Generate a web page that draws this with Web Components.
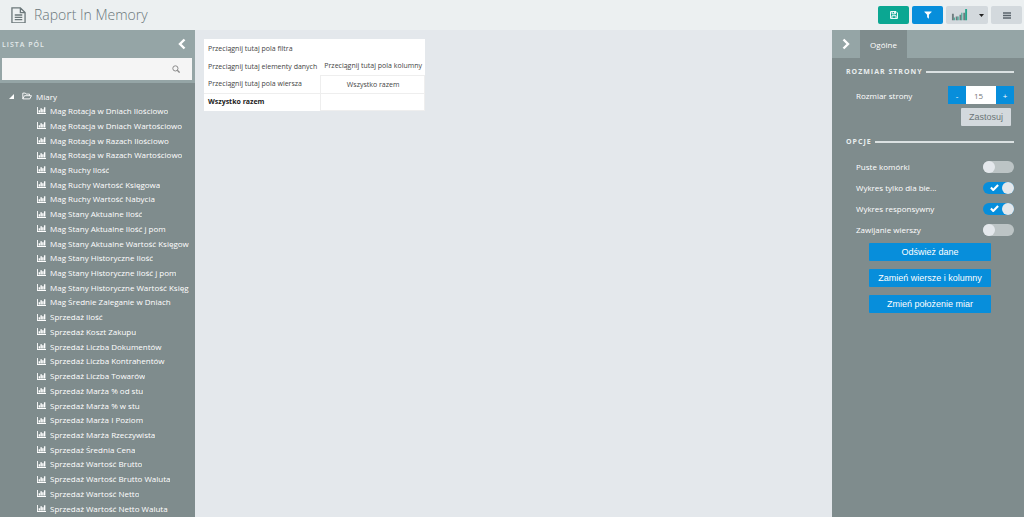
<!DOCTYPE html>
<html lang="pl">
<head>
<meta charset="utf-8">
<title>Raport In Memory</title>
<style>
html, body { height: 100%; }
body { margin: 0; font-family: "Open Sans", "Noto Sans", sans-serif; font-size: 8px; background: #e4e8ec; color: #fff; }
</style>
</head>
<body>
<report-app></report-app>
<script>
const define = (name, html, setup) => {
  const template = document.createElement('template');
  template.innerHTML = '<style>*{box-sizing:border-box}button,input{font:inherit;margin:0;border:0}</style>' + html;
  customElements.define(name, class extends HTMLElement {
    constructor() {
      super();
      this.attachShadow({ mode: 'open' }).append(template.content.cloneNode(true));
    }
    connectedCallback() {
      if (setup && !this.ready) { this.ready = true; setup(this, this.shadowRoot); }
    }
  });
};

const icons = {
  file: '<svg viewBox="0 0 16 18"><path d="M1 1h9l5 5v11H1zM10 1v5h5M4 8.500h8M4 11h8M4 13.500h8" fill="none" stroke="currentColor" stroke-width="1.400"/></svg>',
  left: '<svg viewBox="0 0 8 12"><path d="M6.500 1.500 2 6l4.500 4.500" fill="none" stroke="currentColor" stroke-width="2.400"/></svg>',
  right: '<svg viewBox="0 0 8 12"><path d="M1.500 1.500 6 6l-4.500 4.500" fill="none" stroke="currentColor" stroke-width="2.400"/></svg>',
  search: '<svg viewBox="0 0 8 8"><circle cx="3.400" cy="3.400" r="2.600" fill="none" stroke="currentColor"/><path d="m5.300 5.300 2.300 2.300" stroke="currentColor" stroke-width="1.300"/></svg>',
  folder: '<svg viewBox="0 0 10 8"><path d="M.8 6.900V1.100h2.500l.8 1h3.400v1.500M.8 6.900l1.700-3.200h7L7.800 6.900z" fill="none" stroke="currentColor" stroke-width=".9" stroke-linejoin="round"/></svg>',
  chart: '<svg viewBox="0 0 10 8"><path d="M0 0h1v6.800H10v1H0zM1.800 3.500h1.600v2.700H1.800zM3.800 1.300h1.600v4.900H3.800zM5.800 2.600h1.500v3.600H5.800zM7.700.3h1.600v5.900H7.700z" fill="currentColor"/></svg>',
  save: '<svg viewBox="0 0 9 9"><path d="M.6.6h6.200l1.600 1.600v6.200H.6zM2.400.8v2.400h3.700V.8M2.200 8.200V5.300h4.600v2.900" fill="none" stroke="currentColor" stroke-width="1.100"/><path d="M4.600 1h1v1.700h-1z" fill="currentColor"/></svg>',
  filter: '<svg viewBox="0 0 8 8"><path d="M.4.400h7.200v.5L4.900 3.700v4L3.100 6.200V3.700L.4.900z" fill="currentColor"/></svg>',
  bars: '<svg viewBox="0 0 18 12"><path d="M1 5h2v7H1zM5 8h2v4H5zM9 6h2v6H9zM13 4h2v8h-2z" fill="#6f7d80"/><path d="M3 9h1v3H3zM7 8h1v4H7zM11 4h1v8h-1zM15 0h2v12h-2z" fill="#27a68d"/></svg>',
  caret: '<svg viewBox="0 0 5 3"><path d="M0 0h5L2.500 3z" fill="#222"/></svg>',
  menu: '<svg viewBox="0 0 8 7"><path d="M0 1h8M0 3.500h8M0 6h8" stroke="#59636b" stroke-width="1.300"/></svg>',
  expanded: '<svg viewBox="0 0 5 5"><path d="M5 0v5H0z" fill="currentColor"/></svg>',
  check: '<svg viewBox="0 0 10 8"><path d="m1 4 2.600 2.600L9 1" fill="none" stroke="#fff" stroke-width="2.400"/></svg>'
};

define('ui-icon', '<style>:host{display:block;flex:none;line-height:0}svg{display:block;width:100%}</style><span></span>',
  (el, root) => { root.querySelector('span').innerHTML = icons[el.getAttribute('name')]; });

define('tool-button', `<style>
:host{display:block}
button{display:flex;align-items:center;justify-content:center;gap:11px;width:100%;height:18px;padding:0;border-radius:2px;background:var(--fill,#d3d9dd);color:#fff}
</style><button type="button"><slot></slot></button>`,
  (el, root) => root.querySelector('button').setAttribute('aria-label', el.getAttribute('label')));

define('app-header', `<style>
:host{display:flex;align-items:center;height:30px;padding:0 2px 0 11px;background:#ecf0f1;color:#6b777a}
.doc{width:15px;margin-right:8px}
h1{flex:1;margin:0;font-size:14px;line-height:22px;font-weight:300}
.tools{display:flex;gap:3px}
.narrow{width:31px}.wide{width:42px}
</style>
<ui-icon class="doc" name="file"></ui-icon><h1><slot></slot></h1>
<div class="tools">
<tool-button class="narrow" label="Zapisz" style="--fill:#0ba792"><ui-icon name="save" style="width:8px"></ui-icon></tool-button>
<tool-button class="narrow" label="Filtruj" style="--fill:#078edb"><ui-icon name="filter" style="width:8px"></ui-icon></tool-button>
<tool-button class="wide" label="Typ wykresu"><ui-icon name="bars" style="width:17px"></ui-icon><ui-icon name="caret" style="width:5px"></ui-icon></tool-button>
<tool-button class="narrow" label="Menu"><ui-icon name="menu" style="width:8px"></ui-icon></tool-button>
</div>`);

define('field-item', `<style>
:host{display:flex;align-items:center;gap:4px;padding-left:37px;min-width:0}
ui-icon{width:9px}
span{overflow:hidden;white-space:nowrap;line-height:14px}
</style><ui-icon name="chart"></ui-icon><span><slot></slot></span>`);

define('field-list', `<style>
:host{display:flex;flex-direction:column;background:#7f8c8d}
.top{background:#95a5a6;padding:0 3px 3px 2px}
.title{display:flex;align-items:center;justify-content:space-between;height:28px;padding-right:6px}
h2{margin:0;font-size:7px;font-weight:600;letter-spacing:1px;color:#e4eaea}
.collapse{padding:0;background:none;color:#fff}
.collapse ui-icon{width:8px}
.search{display:flex;align-items:center;height:22px;padding-right:12px;background:#f5f5f5;color:#8b8b8b}
input{flex:1;min-width:0;height:22px;padding:0 6px;background:none;outline:0}
.search ui-icon{width:8px}
.tree{flex:1;display:grid;grid-auto-rows:minmax(14px,1fr);padding:6px 6px 1px 0}
.root{display:flex;align-items:center;padding-left:9px}
.root .arrow{width:5px;margin-right:8px}
.root .folder{width:10px;margin-right:4px}
</style>
<div class="top"><div class="title"><h2>LISTA PÓL</h2><button class="collapse" type="button" aria-label="Zwiń"><ui-icon name="left"></ui-icon></button></div>
<div class="search"><input type="text" aria-label="Szukaj pola"><ui-icon name="search"></ui-icon></div></div>
<div class="tree"><div class="root"><ui-icon class="arrow" name="expanded"></ui-icon><ui-icon class="folder" name="folder"></ui-icon>Miary</div></div>`,
(el, root) => {
  const tree = root.querySelector('.tree');
  for (const name of ['Mag Rotacja w Dniach Ilościowo','Mag Rotacja w Dniach Wartościowo','Mag Rotacja w Razach Ilościowo','Mag Rotacja w Razach Wartościowo','Mag Ruchy Ilość','Mag Ruchy Wartość Księgowa','Mag Ruchy Wartość Nabycia','Mag Stany Aktualne Ilość','Mag Stany Aktualne Ilość j pom','Mag Stany Aktualne Wartość Księgow','Mag Stany Historyczne Ilość','Mag Stany Historyczne Ilość j pom','Mag Stany Historyczne Wartość Księg','Mag Średnie Zaleganie w Dniach','Sprzedaż Ilość','Sprzedaż Koszt Zakupu','Sprzedaż Liczba Dokumentów','Sprzedaż Liczba Kontrahentów','Sprzedaż Liczba Towarów','Sprzedaż Marża % od stu','Sprzedaż Marża % w stu','Sprzedaż Marża I Poziom','Sprzedaż Marża Rzeczywista','Sprzedaż Średnia Cena','Sprzedaż Wartość Brutto','Sprzedaż Wartość Brutto Waluta','Sprzedaż Wartość Netto','Sprzedaż Wartość Netto Waluta']) {
    const item = document.createElement('field-item');
    item.textContent = name;
    tree.append(item);
  }
});

define('pivot-table', `<style>
:host{display:block;padding:9px}
table{border-collapse:collapse;background:#fff;color:#444;font-size:7px;line-height:10px}
td,th{height:18px;padding:1px 3px 0 4px;text-align:left;font-weight:400;white-space:nowrap}
.grid{border:1px solid #eee;text-align:center}
.total th{font-weight:700;color:#222}
.total td,.total th{height:17px;padding-top:0}
.total{border-top:1px solid #eee}
</style>
<table><tbody>
<tr><td colspan="2">Przeciągnij tutaj pola filtra</td></tr>
<tr><td>Przeciągnij tutaj elementy danych</td><td>Przeciągnij tutaj pola kolumny</td></tr>
<tr><td>Przeciągnij tutaj pola wiersza</td><th class="grid" scope="col">Wszystko razem</th></tr>
<tr class="total"><th scope="row">Wszystko razem</th><td class="grid"></td></tr>
</tbody></table>`);

define('section-title', `<style>
:host{display:flex;align-items:center;gap:3px;height:12px}
h2{margin:0;font-size:7px;line-height:12px;font-weight:700;letter-spacing:1px;color:#e9eeee}
i{flex:1;height:2px;background:#dbe1e2}
</style><h2><slot></slot></h2><i></i>`);

define('toggle-row', `<style>
:host{display:block}
label{display:flex;align-items:center;justify-content:space-between;height:21px;padding-left:10px}
.switch{display:grid;align-items:center;width:31px;height:12px}
.switch>*{grid-area:1/1}
input{appearance:none;display:flex;align-items:center;width:31px;height:12px;border-radius:6px;background:#bcc4c5}
input::before{content:"";width:12px;height:12px;border-radius:50%;background:#e4e8ec}
input:checked{justify-content:flex-end;background:#078edb}
ui-icon{width:9px;margin-left:7px;visibility:hidden;pointer-events:none}
input:checked+ui-icon{visibility:visible}
</style><label><slot></slot><span class="switch"><input type="checkbox"><ui-icon name="check"></ui-icon></span></label>`,
(el, root) => {
  const input = root.querySelector('input');
  input.checked = el.hasAttribute('checked');
  input.setAttribute('aria-label', el.textContent);
});

define('action-button', `<style>
:host{display:block}
button{display:block;width:100%;height:18px;padding:0;border-radius:1px;background:#078edb;color:#fff;font-family:"Liberation Sans",Arial,sans-serif;font-size:9px;line-height:18px}
</style><button type="button"><slot></slot></button>`);

define('options-panel', `<style>
:host{display:block;background:#7f8c8d}
.tabs{display:flex;height:28px;background:#95a5a6}
.tabs button{padding:0;background:none;color:#fff}
.tabs .fold{width:28px;padding-left:10px}
.fold ui-icon{width:8px}
.tabs .tab{width:47px;background:#7f8c8d}
.body{padding:8px 10px 0 14px}
.size{display:flex;align-items:center;justify-content:space-between;height:18px;margin-top:8px;padding-left:10px}
.stepper{display:flex}
.stepper button{width:18px;height:18px;padding:0;background:#078edb;color:#fff}
.stepper input{width:30px;height:18px;padding:0 8px;border-radius:0;background:#fff;color:#777;font-size:8px}
.apply{display:block;width:50px;height:18px;margin:4px 3px 10px auto;padding:0;border-radius:1px;background:#d3d9dd;color:#6b7577;font-family:"Liberation Sans",Arial,sans-serif;font-size:9px}
.toggles{margin-top:8px}
.actions{display:grid;gap:8px;margin:3px 23px 0}
</style>
<div class="tabs"><button class="fold" type="button" aria-label="Zwiń"><ui-icon name="right"></ui-icon></button><button class="tab" type="button">Ogólne</button></div>
<div class="body">
<section-title>ROZMIAR STRONY</section-title>
<div class="size"><label for="size">Rozmiar strony</label><span class="stepper"><button type="button">-</button><input id="size" type="text" value="15"><button type="button">+</button></span></div>
<button class="apply" type="button">Zastosuj</button>
<section-title>OPCJE</section-title>
<div class="toggles">
<toggle-row>Puste komórki</toggle-row>
<toggle-row checked>Wykres tylko dla bie...</toggle-row>
<toggle-row checked>Wykres responsywny</toggle-row>
<toggle-row>Zawijanie wierszy</toggle-row>
</div>
<div class="actions"><action-button>Odśwież dane</action-button><action-button>Zamień wiersze i kolumny</action-button><action-button>Zmień położenie miar</action-button></div>
</div>`);

define('report-app', `<style>
:host{display:flex;flex-direction:column;min-height:100vh}
main{flex:1;display:grid;grid-template-columns:195px minmax(0,1fr) 192px}
</style>
<app-header>Raport In Memory</app-header>
<main><field-list></field-list><pivot-table></pivot-table><options-panel></options-panel></main>`);
</script>
</body>
</html>
